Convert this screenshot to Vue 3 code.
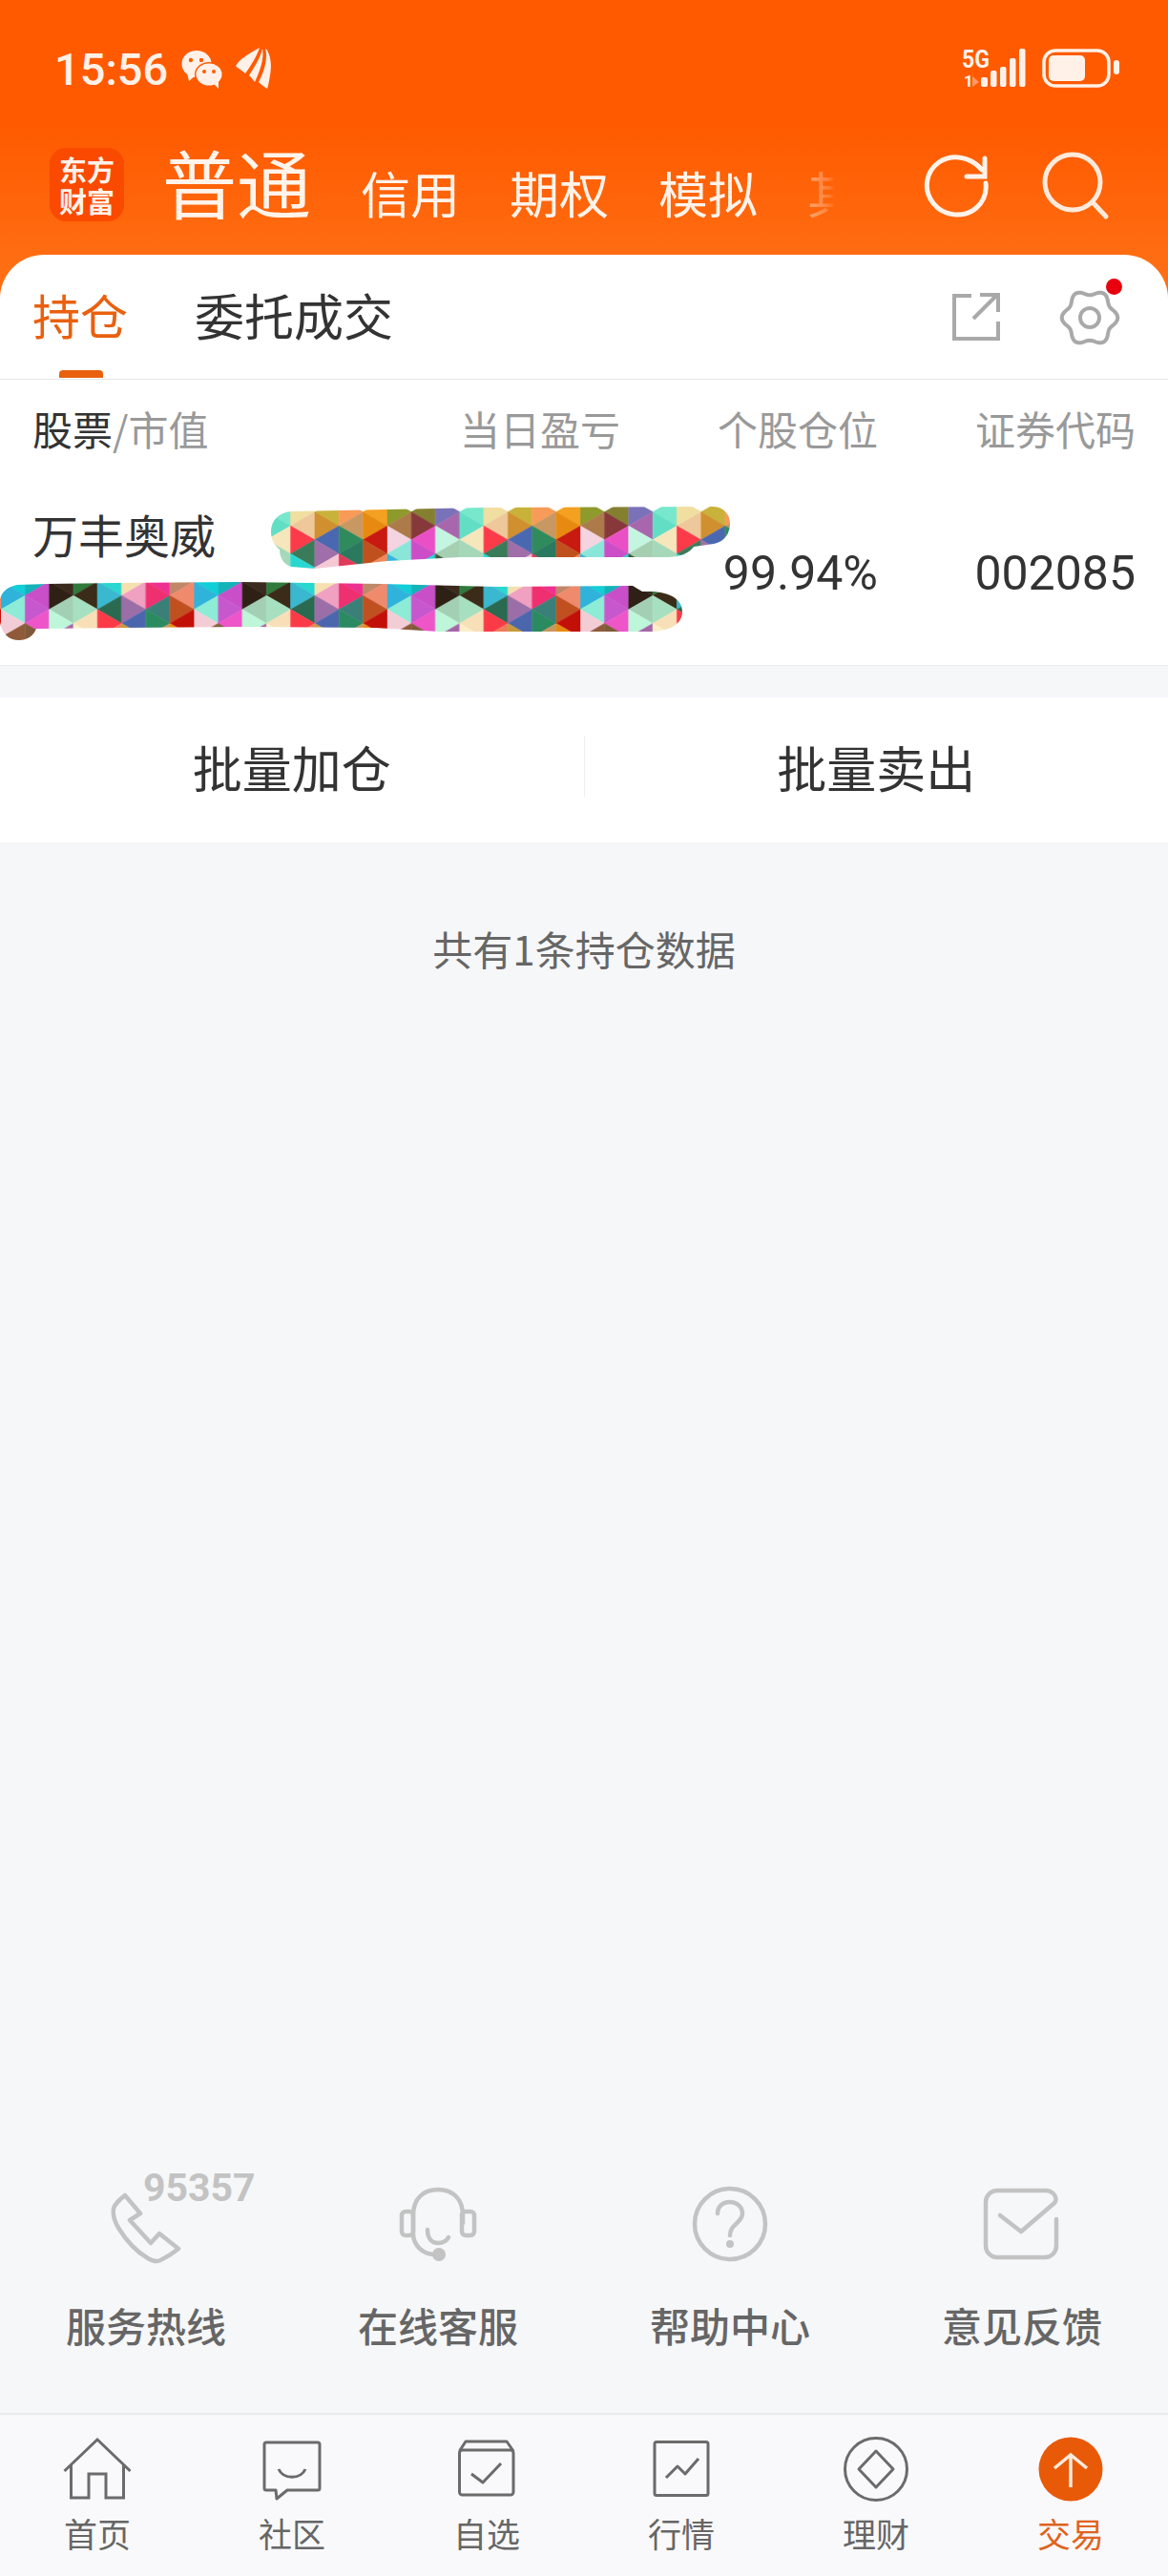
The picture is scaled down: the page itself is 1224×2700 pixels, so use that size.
<template>
  <div class="page">
    <div class="status-bar">
      <span class="time">15:56</span>
      <svg class="wechat" width="46" height="42" viewBox="0 0 46 42">
        <ellipse cx="17" cy="15" rx="15.5" ry="14" fill="#fff1e8" />
        <path d="M7 24 L9 33 L16 27 Z" fill="#fff1e8" />
        <circle cx="11" cy="11" r="2.2" fill="#ff5a00" />
        <circle cx="22" cy="11" r="2.2" fill="#ff5a00" />
        <ellipse cx="30" cy="26" rx="15" ry="13" fill="#ff5a00" />
        <ellipse cx="30" cy="26" rx="13.5" ry="11.5" fill="#fff1e8" />
        <path d="M34 35 L40 41 L40 32 Z" fill="#fff1e8" />
        <circle cx="25" cy="23" r="2" fill="#ff5a00" />
        <circle cx="35" cy="23" r="2" fill="#ff5a00" />
      </svg>
      <svg class="feather" width="40" height="46" viewBox="0 0 40 46">
        <path d="M2 20 C7 12 18 6 27 1 C24 10 18 20 12 28 C8 24 4 23 2 20Z" fill="#fff1e8" />
        <path d="M16 30 C22 21 28 11 30 2 C32 12 28 24 22 37 C20 34 18 32 16 30Z" fill="#fff1e8" />
        <path d="M33 1 C39 8 40 20 38 30 C37 36 36 41 35 44 C32 42 29 40 26 37 C32 26 36 12 33 1Z" fill="#fff1e8" />
      </svg>
      <svg class="signal" width="172" height="48" viewBox="1004 49 172 48">
        <text x="1008" y="72" class="net-label" textLength="29" lengthAdjust="spacingAndGlyphs">5G</text>
        <text x="1010" y="92" class="sim-label">1</text>
        <path d="M1019 81 L1026 87 L1019 92Z" fill="#ff9a66" />
        <rect x="1028" y="82" width="7" height="10" rx="2" fill="#fff1e8" />
        <rect x="1038" y="75" width="6.5" height="17" rx="2" fill="#fff1e8" />
        <rect x="1048" y="71" width="6.5" height="21" rx="2" fill="#fff1e8" />
        <rect x="1058" y="62" width="6.5" height="30" rx="2" fill="#fff1e8" />
        <rect x="1068" y="52" width="6.5" height="40" rx="2" fill="#fff1e8" />
        <rect x="1094" y="54" width="68" height="37" rx="12" fill="none" stroke="#fff1e8" stroke-width="3.5" />
        <rect x="1099" y="59" width="38" height="27" rx="5" fill="#fff1e8" />
        <rect x="1167" y="64" width="6" height="15" rx="3" fill="#fff1e8" />
      </svg>
    </div>

    <div class="account-bar">
      <div class="logo">
        <span>东方财富</span>
      </div>
      <div class="account-tabs">
        <span class="account-tab active">普通</span>
        <span class="account-tab">信用</span>
        <span class="account-tab">期权</span>
        <span class="account-tab">模拟</span>
        <span class="account-tab">其他</span>
      </div>
      <svg class="refresh" width="72" height="72" viewBox="0 0 72 72" fill="none" stroke="#fff3ea" stroke-width="5" stroke-linecap="round">
        <path d="M66 31 C67 40 64 50 56 57 C43 68 22 66 11 52 C0 38 3 19 17 9 C31 0 50 3 62 17" />
        <path d="M65 5 V24 H46" />
      </svg>
      <svg class="search" width="72" height="72" viewBox="0 0 72 72" fill="none" stroke="#ffeadc" stroke-width="5" stroke-linecap="round">
        <circle cx="33" cy="32" r="29" />
        <path d="M54 53 L68 68" />
      </svg>
    </div>

    <div class="panel">
      <div class="panel-tabs">
        <span class="panel-tab active">持仓</span>
        <span class="panel-tab">委托成交</span>
        <svg class="share" width="52" height="52" viewBox="0 0 52 52" fill="none" stroke="#a9a9a9" stroke-width="4">
          <path d="M21 4 H3 V49 H49 V31" />
          <path d="M23 28 L48 3" />
          <path d="M30 3 H49 V21" />
        </svg>
        <div class="gear-wrap">
          <svg width="64" height="64" viewBox="0 0 64 64" fill="none" stroke="#a9a9a9" stroke-width="4">
            <path :d="gearPath" />
            <circle cx="32" cy="32" r="10" />
          </svg>
          <i class="red-dot"></i>
        </div>
      </div>

      <div class="holdings">
        <div class="table-row table-head">
          <span><b>股票</b>/市值</span>
          <span>当日盈亏</span>
          <span>个股仓位</span>
          <span>证券代码</span>
        </div>
        <div class="table-row stock-row">
          <span class="stock-name">万丰奥威</span>
          <span></span>
          <span class="num">99.94%</span>
          <span class="num">002085</span>
        </div>
        <!-- 截图上的马赛克涂抹 -->
        <svg class="scribble" width="800" height="155" viewBox="0 525 800 155">
          <defs>
            <pattern id="mosaic" patternUnits="userSpaceOnUse" x="1" y="522" width="202.4" height="190">
              <polygon
                v-for="tri in triangles"
                :key="tri.id"
                :points="tri.points"
                :fill="tri.color"
                :stroke="tri.color"
                stroke-width="0.5"
              />
            </pattern>
          </defs>
          <path
            fill="url(#mosaic)"
            d="M305 536 C292 537 284 546 284 557 C284 566 288 572 293 576 C293 585 298 592 305 594 L330 596 L406 588 L482 584 L640 584 L700 584 C712 584 722 580 727 573 L748 570 C758 568 765 560 765 549 C765 538 757 531 747 531 L507 532 L407 534 Z"
          />
          <path
            fill="url(#mosaic)"
            d="M0 628 C2 620 8 615 18 613 L50 612 L120 611 L250 610 L400 612 L520 615 L663 614 L673 620 L684 620 C702 621 715 628 715 641 C715 654 702 662 680 662 L520 662 L460 662 L393 658 L260 657 L130 658 L38 659 C35 667 28 671 20 671 C9 671 2 664 0 652 Z"
          />
        </svg>
      </div>
    </div>

    <div class="actions">
      <span class="action">批量加仓</span>
      <i class="action-line"></i>
      <span class="action">批量卖出</span>
    </div>

    <p class="count">共有1条持仓数据</p>

    <div class="spacer"></div>

    <div class="help-grid">
      <div class="help-item">
        <div class="help-icon">
          <span class="hotline">95357</span>
          <svg width="82" height="84" viewBox="0 0 82 84" fill="none" stroke="#c3c3c3" stroke-width="4.5" stroke-linejoin="round">
            <path d="M19 11 C13 16 8 20 7 25 C6 32 9 40 12 45 C20 58 31 70 43 77 C48 80 54 81 58 78 C64 75 70 71 75 67 L55 51 L46 61 L24 37 L35 30 Z" />
          </svg>
        </div>
        <span class="help-label">服务热线</span>
      </div>
      <div class="help-item">
        <div class="help-icon">
          <svg width="82" height="84" viewBox="0 0 82 84" fill="none" stroke="#c3c3c3" stroke-width="4.5" stroke-linecap="round" stroke-linejoin="round">
            <path d="M15 53 V32 C15 14 26 5 41 5 C56 5 67 14 67 32 V40" />
            <rect x="3" y="28" width="12" height="25" rx="4" />
            <rect x="66" y="28" width="13" height="25" rx="4" />
            <path d="M15 53 C16 63 24 72 36 73" />
            <path d="M30 47 C30 58 36 61 41 61 C46 61 50 59 52 55" />
            <circle cx="42" cy="73" r="7" fill="#c3c3c3" stroke="none" />
          </svg>
        </div>
        <span class="help-label">在线客服</span>
      </div>
      <div class="help-item">
        <div class="help-icon">
          <svg width="82" height="84" viewBox="0 0 82 84" fill="none" stroke="#c3c3c3" stroke-width="4.5" stroke-linecap="round">
            <circle cx="41" cy="41" r="37" />
            <path d="M28 30 C28 22 34 18 41 18 C48 18 54 23 54 30 C54 40 41 41 41 53" />
            <circle cx="41" cy="62" r="4" fill="#c3c3c3" stroke="none" />
          </svg>
        </div>
        <span class="help-label">帮助中心</span>
      </div>
      <div class="help-item">
        <div class="help-icon">
          <svg width="82" height="84" viewBox="0 0 82 84" fill="none" stroke="#c3c3c3" stroke-width="4.5" stroke-linecap="round" stroke-linejoin="round">
            <path d="M77 36 V64 A12 12 0 0 1 65 76 H15 A12 12 0 0 1 3 64 V18 A12 12 0 0 1 15 6 H66 C74 6 79 14 75 19 L40 49 L18 32" />
          </svg>
        </div>
        <span class="help-label">意见反馈</span>
      </div>
    </div>

    <nav class="tab-bar">
      <div class="nav-item">
        <svg width="72" height="72" viewBox="0 0 72 72" fill="none" stroke="#6b6b6b" stroke-width="3">
          <path d="M1.5 38 L36 5 L70.5 38" />
          <path d="M8.5 31 V66 H27 V41 H45 V66 H63.5 V31" />
        </svg>
        <span>首页</span>
      </div>
      <div class="nav-item">
        <svg width="72" height="72" viewBox="0 0 72 72" fill="none" stroke="#6b6b6b" stroke-width="3" stroke-linejoin="round">
          <path d="M9 8 H63 A2 2 0 0 1 65 10 V56 A2 2 0 0 1 63 58 H31 L20 67 L19 58 H9 A2 2 0 0 1 7 56 V10 A2 2 0 0 1 9 8 Z" />
          <path d="M22 36 C27 47 45 47 50 36" />
        </svg>
        <span>社区</span>
      </div>
      <div class="nav-item">
        <svg width="72" height="72" viewBox="0 0 72 72" fill="none" stroke="#6b6b6b" stroke-width="3" stroke-linejoin="round">
          <path d="M7.5 17 L14 7 H57 L64 17" />
          <rect x="7.5" y="16" width="56.5" height="47" rx="3" />
          <path d="M20 41 L32 50 L51 30" />
        </svg>
        <span>自选</span>
      </div>
      <div class="nav-item">
        <svg width="72" height="72" viewBox="0 0 72 72" fill="none" stroke="#6b6b6b" stroke-width="3" stroke-linejoin="round">
          <rect x="8" y="7.5" width="56" height="56" rx="2" />
          <path d="M20 45 L32 33 L40 41 L54 25" />
        </svg>
        <span>行情</span>
      </div>
      <div class="nav-item">
        <svg width="72" height="72" viewBox="0 0 72 72" fill="none" stroke="#6b6b6b" stroke-width="3" stroke-linejoin="round">
          <circle cx="36" cy="36" r="32.5" />
          <path d="M36 17 L54 36 L36 55 L18 36 Z" />
        </svg>
        <span>理财</span>
      </div>
      <div class="nav-item active">
        <svg width="72" height="72" viewBox="0 0 72 72" fill="none">
          <circle cx="36" cy="36" r="33.5" fill="#e85a08" />
          <path d="M36 55 V21 M19 35 L36 21 L53 35" stroke="#ffeadd" stroke-width="3.5" />
        </svg>
        <span>交易</span>
      </div>
    </nav>
  </div>
</template>

<script setup>
// 每列 11 个三角形的颜色，从上到下，8 列循环（前 5 个给第一笔，后 6 个给第二笔）
const columns = [
  ['#8f9a2c', '#ad7a4a', '#f3d4e0', '#8be6da', '#35b4dc', '#10cfd6', '#2fb3da', '#8cecd6', '#f3cdd6', '#8f5a3a', '#8f5a3a'],
  ['#84802f', '#86383a', '#ea4fc5', '#cc4dc8', '#28cfd0', '#13b3b8', '#c84fc8', '#c757cc', '#ee55c8', '#7f5a3a', '#7f5a3a'],
  ['#7a72b8', '#a866ac', '#c4f5e0', '#a6cfb2', '#3a5a3a', '#3c2a1e', '#2e2014', '#a3d0b4', '#bdf6d8', '#a566a8', '#a566a8'],
  ['#78e8cc', '#62dec4', '#f6e6bc', '#a4d8b8', '#a4d8b8', '#2f7a3c', '#3a2c18', '#a6e0c0', '#f8dfb8', '#fbeec8', '#fbeec8'],
  ['#f0dfa0', '#eec89a', '#fb3a4a', '#3a7b5a', '#28d8d0', '#28d8d0', '#3ab8d0', '#2a6a50', '#fb3a48', '#f27b5e', '#f4a58c'],
  ['#c9b23a', '#d09030', '#4a68b0', '#a06ea8', '#f6c8d4', '#f6e0b0', '#f0a0c0', '#9c6ea8', '#4c66ae', '#c89a3a', '#c89a3a'],
  ['#f89a58', '#c89862', '#2f8a5c', '#2a7a60', '#e03a5a', '#ee3090', '#ee2f70', '#3a7f78', '#2a8a60', '#c89860', '#c89860'],
  ['#f4a020', '#e88a10', '#c81a10', '#c0501e', '#f08a5c', '#c08868', '#f08a6c', '#c05020', '#c21008', '#e88a10', '#e88a10']
]

const colWidth = 25.3
const step = 14.6

const triangles = []
columns.forEach((colors, c) => {
  const point = (j) => {
    const side = (j + c) % 2
    return `${(c + side) * colWidth},${j * step}`
  }
  colors.forEach((color, i) => {
    triangles.push({
      id: `${c}-${i}`,
      color,
      points: `${point(i)} ${point(i + 1)} ${point(i + 2)}`
    })
  })
})

function buildGear() {
  const parts = []
  for (let a = 0; a < 360; a += 5) {
    const rad = (a * Math.PI) / 180
    const r = 26.5 + 2.8 * Math.cos(6 * rad - Math.PI)
    const x = 32 + r * Math.sin(rad)
    const y = 32 - r * Math.cos(rad)
    parts.push(`${parts.length ? 'L' : 'M'}${x.toFixed(1)} ${y.toFixed(1)}`)
  }
  return parts.join(' ') + ' Z'
}

const gearPath = buildGear()
</script>

<style>
html,
body {
  margin: 0;
  background: #f6f7f9;
}
</style>

<style scoped>
.page {
  width: 1224px;
  height: 2700px;
  display: flex;
  flex-direction: column;
  overflow: hidden;
  font-family: "Noto Sans CJK SC", sans-serif;
  background: linear-gradient(#ff5a00 0, #ff5a00 130px, #ff7318 320px) no-repeat 0 0 / 100% 320px, #f6f7f9;
}

.status-bar {
  height: 144px;
  display: flex;
  align-items: center;
  padding: 0 48px 0 57px;
  box-sizing: border-box;
}

.time {
  font-family: Roboto, sans-serif;
  font-size: 47px;
  font-weight: 500;
  color: #fff1e8;
  width: 132px;
}

.wechat {
  margin-top: 2px;
}

.feather {
  margin-left: 10px;
}

.signal {
  margin-left: auto;
}

.net-label {
  font-family: Roboto, sans-serif;
  font-size: 26px;
  font-weight: 700;
  fill: #fff1e8;
}

.sim-label {
  font-family: Roboto, sans-serif;
  font-size: 17px;
  font-weight: 700;
  fill: #fff1e8;
}

.account-bar {
  height: 123px;
  display: flex;
  align-items: flex-start;
  padding-left: 52px;
  box-sizing: border-box;
}

.logo {
  width: 78px;
  height: 77px;
  margin-top: 11px;
  border-radius: 17px;
  background: #fa4a00;
  color: #fff2ea;
  font-size: 29px;
  font-weight: 700;
  line-height: 33px;
  display: flex;
  align-items: center;
  justify-content: center;
  text-align: center;
}

.logo span {
  width: 60px;
}

.account-tabs {
  width: 705px;
  margin: -4px 0 0 40px;
  height: 120px;
  display: flex;
  align-items: baseline;
  gap: 52px;
  white-space: nowrap;
  -webkit-mask-image: linear-gradient(to right, #000 663px, rgba(0, 0, 0, 0.45) 678px, rgba(0, 0, 0, 0.2) 698px, transparent 705px);
  mask-image: linear-gradient(to right, #000 663px, rgba(0, 0, 0, 0.45) 678px, rgba(0, 0, 0, 0.2) 698px, transparent 705px);
}

.account-tab {
  font-size: 52px;
  line-height: 100px;
  color: #fff3ea;
  flex: none;
}

.account-tab.active {
  font-size: 78px;
}

.refresh {
  margin: 17px 0 0 92px;
}

.search {
  margin: 15px 0 0 52px;
}

.panel {
  background: #fff;
  border-radius: 46px 46px 0 0;
}

.panel-tabs {
  height: 131px;
  display: flex;
  align-items: center;
  padding: 0 50px 6px 34px;
  box-sizing: border-box;
  border-bottom: 1px solid #e4e5e8;
}

.panel-tab {
  position: relative;
  font-size: 52px;
  color: #333;
  margin-right: 70px;
}

.panel-tab.active {
  color: #e9600f;
  font-size: 50px;
}

.panel-tab.active::after {
  content: "";
  position: absolute;
  left: 28px;
  bottom: -31px;
  width: 46px;
  height: 8px;
  border-radius: 4px 4px 0 0;
  background: #e9600f;
}

.share {
  margin: 6px 0 0 auto;
}

.gear-wrap {
  position: relative;
  width: 64px;
  height: 64px;
  margin: 8px 0 0 61px;
}

.red-dot {
  position: absolute;
  right: -2px;
  top: -9px;
  width: 17px;
  height: 17px;
  border-radius: 50%;
  background: #e8000f;
}

.holdings {
  position: relative;
  border-bottom: 1px solid #eaebee;
}

.scribble {
  position: absolute;
  left: 0;
  top: 127px;
}

.table-row {
  display: grid;
  grid-template-columns: 1fr 270px 270px 270px;
  padding: 0 34px;
  box-sizing: border-box;
  text-align: right;
}

.table-row > span:first-child {
  text-align: left;
}

.table-head {
  height: 106px;
  padding-bottom: 6px;
  align-items: center;
  font-size: 42px;
  color: #999;
}

.table-head b {
  font-weight: 400;
  color: #333;
}

.stock-row {
  height: 193px;
  align-items: center;
}

.stock-name {
  align-self: start;
  margin-top: 26px;
  font-size: 48px;
  line-height: 58px;
  color: #333;
}

.num {
  font-family: Roboto, sans-serif;
  font-size: 50px;
  line-height: 58px;
  color: #333;
}

.actions {
  height: 152px;
  margin-top: 33px;
  padding-bottom: 8px;
  box-sizing: border-box;
  background: #fff;
  display: flex;
  align-items: center;
}

.action {
  flex: 1;
  text-align: center;
  font-size: 52px;
  color: #333;
}

.action-line {
  width: 1px;
  height: 64px;
  background: #efefef;
}

.count {
  margin: 81px 0 0;
  text-align: center;
  font-size: 42px;
  line-height: 60px;
  color: #666;
}

.spacer {
  flex: 1;
}

.help-grid {
  display: grid;
  grid-template-columns: repeat(4, 306px);
  padding-bottom: 64px;
}

.help-item {
  display: flex;
  flex-direction: column;
  align-items: center;
}

.help-icon {
  position: relative;
  width: 82px;
  height: 84px;
}

.hotline {
  position: absolute;
  left: 38px;
  top: -21px;
  font-family: Roboto, sans-serif;
  font-size: 41px;
  font-weight: 700;
  line-height: 48px;
  color: #c3c3c3;
}

.help-label {
  margin-top: 35px;
  font-size: 42px;
  font-weight: 500;
  line-height: 56px;
  color: #666;
}

.tab-bar {
  height: 171px;
  box-sizing: border-box;
  border-top: 2px solid #e9eaec;
  padding-top: 21px;
  background: #f9f9fb;
  display: grid;
  grid-template-columns: repeat(6, 204px);
}

.nav-item {
  display: flex;
  flex-direction: column;
  align-items: center;
  font-size: 35px;
  line-height: 44px;
  color: #666;
}

.nav-item span {
  margin-top: 9px;
}

.nav-item.active {
  color: #df6320;
}
</style>
